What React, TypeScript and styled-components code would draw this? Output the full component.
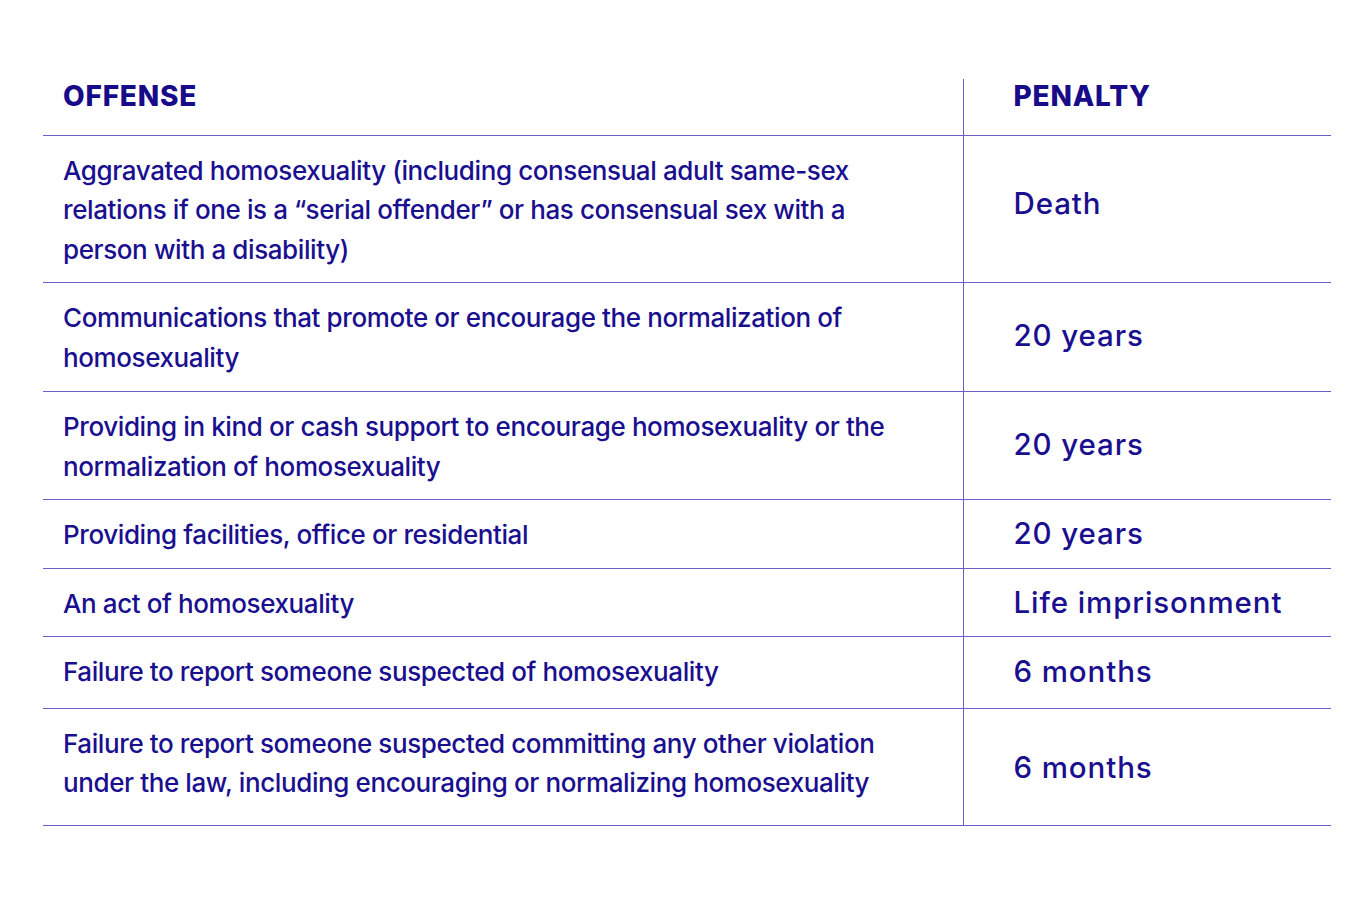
import styled, { createGlobalStyle } from "styled-components";

const GlobalStyle = createGlobalStyle`
	html, body {
		margin: 0;
		padding: 0;
		background: #ffffff;
	}
	body {
		font-family: "Inter", "Noto Sans", sans-serif;
		color: #1a0f8f;
	}
`;

type Offense = {
	text: string;
	penalty: string;
	extra?: number;
	lift?: number;
};

const offenses: Offense[] = [
	{
		text: "Aggravated homosexuality (including consensual adult same-sex relations if one is a \u201cserial offender\u201d or has consensual sex with a person with a disability)",
		penalty: "Death",
		lift: 12,
	},
	{
		text: "Communications that promote or encourage the normalization of homosexuality",
		penalty: "20 years",
		extra: 1,
		lift: 4,
	},
	{
		text: "Providing in kind or cash support to encourage homosexuality or the normalization of homosexuality",
		penalty: "20 years",
		lift: 4,
	},
	{ text: "Providing facilities, office or residential", penalty: "20 years" },
	{ text: "An act of homosexuality", penalty: "Life imprisonment", lift: 0 },
	{ text: "Failure to report someone suspected of homosexuality", penalty: "6 months", extra: 3 },
	{
		text: "Failure to report someone suspected committing any other violation under the law, including encouraging or normalizing homosexuality",
		penalty: "6 months",
		extra: 9,
		lift: 0,
	},
];

const App = () => {
	return (
		<>
			<GlobalStyle />
			<StyledPage>
				<StyledTable>
					<thead>
						<tr>
							<StyledTh>OFFENSE</StyledTh>
							<StyledTh $side>PENALTY</StyledTh>
						</tr>
					</thead>
					<tbody>
						{offenses.map((offense, index) => (
							<StyledRow key={index}>
								<StyledOffense $extra={offense.extra ?? 0}>{offense.text}</StyledOffense>
								<StyledPenalty $lift={offense.lift ?? 2}>{offense.penalty}</StyledPenalty>
							</StyledRow>
						))}
					</tbody>
				</StyledTable>
			</StyledPage>
		</>
	);
};

export default App;

const StyledPage = styled.div`
	width: 1360px;
	min-height: 916px;
	padding: 79px 29px 0 43px;
	box-sizing: border-box;
`;

const StyledTable = styled.table`
	width: 1288px;
	border-collapse: collapse;
	table-layout: fixed;
`;

const StyledTh = styled.th<{ $side?: boolean }>`
	width: ${(p) => (p.$side ? "368px" : "920px")};
	height: 56px;
	box-sizing: border-box;
	padding: 0 0 0 ${(p) => (p.$side ? "50px" : "20px")};
	vertical-align: top;
	text-align: left;
	font-size: 28px;
	line-height: 34px;
	font-weight: 800;
	letter-spacing: 0.8px;
	color: #170b8a;
	border-bottom: 1.5px solid #6a5fcb;
	border-left: ${(p) => (p.$side ? "1.5px solid #6a5fcb" : "none")};
`;

const StyledRow = styled.tr`
	border-bottom: 1.5px solid #6a5fcb;
`;

const StyledOffense = styled.td<{ $extra: number }>`
	padding: 15px 30px ${(p) => 13 + p.$extra}px 20px;
	vertical-align: top;
	font-size: 26px;
	line-height: 39.5px;
	font-weight: 500;
	letter-spacing: -0.4px;
	color: #1a0f8f;
`;

const StyledPenalty = styled.td<{ $lift: number }>`
	padding: 0 0 ${(p) => p.$lift}px 50px;
	vertical-align: middle;
	border-left: 1.5px solid #6a5fcb;
	font-size: 29.5px;
	line-height: 40px;
	font-weight: 500;
	letter-spacing: 0.9px;
	color: #1a0f8f;
`;
